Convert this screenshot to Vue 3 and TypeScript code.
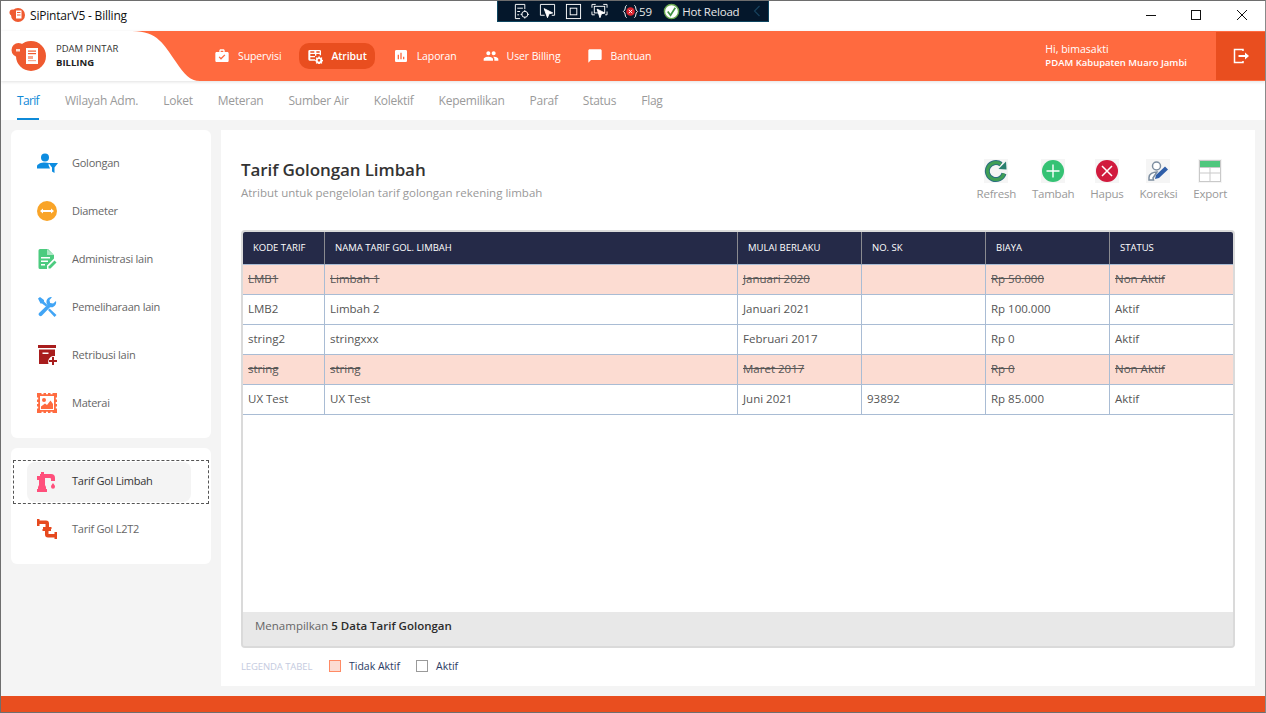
<script setup lang="ts">
import { ref } from 'vue';

interface Row {
  kode: string;
  nama: string;
  mulai: string;
  sk: string;
  biaya: string;
  status: string;
}

const tabs = ['Tarif', 'Wilayah Adm.', 'Loket', 'Meteran', 'Sumber Air', 'Kolektif', 'Kepemilikan', 'Paraf', 'Status', 'Flag'];
const activeTab = ref('Tarif');

const columns = ['KODE TARIF', 'NAMA TARIF GOL. LIMBAH', 'MULAI BERLAKU', 'NO. SK', 'BIAYA', 'STATUS'];

const rows: Row[] = [
  { kode: 'LMB1', nama: 'Limbah 1', mulai: 'Januari 2020', sk: '', biaya: 'Rp 50.000', status: 'Non Aktif' },
  { kode: 'LMB2', nama: 'Limbah 2', mulai: 'Januari 2021', sk: '', biaya: 'Rp 100.000', status: 'Aktif' },
  { kode: 'string2', nama: 'stringxxx', mulai: 'Februari 2017', sk: '', biaya: 'Rp 0', status: 'Aktif' },
  { kode: 'string', nama: 'string', mulai: 'Maret 2017', sk: '', biaya: 'Rp 0', status: 'Non Aktif' },
  { kode: 'UX Test', nama: 'UX Test', mulai: 'Juni 2021', sk: '93892', biaya: 'Rp 85.000', status: 'Aktif' },
];
</script>

<template>
  <div class="window">
    <div class="titlebar">
      <svg class="app-icon" viewBox="0 0 16 16">
        <circle cx="9" cy="8" r="7" fill="#ef5a30" />
        <circle cx="3.5" cy="5.5" r="3" fill="#ef5a30" />
        <rect x="7" y="3.5" width="5.5" height="8" fill="#fff" />
        <rect x="8" y="5" width="3.5" height="1" fill="#ef5a30" />
        <rect x="8" y="7.5" width="3.5" height="1" fill="#ef5a30" />
      </svg>
      <span class="app-title">SiPintarV5 - Billing</span>
      <div class="win-buttons">
        <svg viewBox="0 1 46 28"><path d="M19 15.500h10" stroke="#111" stroke-width="1" fill="none" /></svg>
        <svg viewBox="0 1 46 28"><rect x="18.500" y="10.500" width="9" height="9" stroke="#111" fill="none" /></svg>
        <svg viewBox="0 1 46 28"><path d="M18 10l10 10M28 10L18 20" stroke="#111" fill="none" /></svg>
      </div>
    </div>

    <div class="devbar">
      <svg class="dev-icon" viewBox="0 0 18 18" fill="none" stroke="#fff" stroke-width="1">
        <path d="M2.500 1.500h10v5M2.500 1.500v15h5M4.500 5.500h6M4.500 9h3M4.500 12.500h2" />
        <circle cx="12.500" cy="12" r="3.200" />
        <path d="M12.500 7.500v2M12.500 14.500v2M8 12h2M15 12h2" />
      </svg>
      <svg class="dev-icon" viewBox="0 0 18 18" fill="none" stroke="#fff" stroke-width="1">
        <path d="M6 13H1.500V1.500h15V13h-3" />
        <path d="M5.500 6l9 4.500-4 1-1.500 4z" fill="#fff" />
      </svg>
      <svg class="dev-icon" viewBox="0 0 18 18" fill="none" stroke="#fff" stroke-width="1">
        <rect x="1.500" y="1.500" width="15" height="15" />
        <rect x="5.500" y="5.500" width="7" height="7" />
      </svg>
      <svg class="dev-icon" viewBox="0 0 18 18" fill="none" stroke="#fff" stroke-width="1">
        <path d="M1 5V1.500h4M13 1.500h4V5M1 9v3.500h3M17 9v3.500h-2" />
        <rect x="3.500" y="3.500" width="11" height="7" />
        <path d="M6.500 6.500l8 4-3.500 1-1.500 4z" fill="#fff" />
      </svg>
      <span class="dev-count">
        <svg viewBox="0 0 18 18" width="17" height="17">
          <path d="M5 2.500C2.500 3 4.500 7.500 1.500 9 4.500 10.500 2.500 15 5 15.500M13 2.500C15.500 3 13.500 7.500 16.500 9 13.500 10.500 15.500 15 13 15.500" fill="none" stroke="#fff" />
          <circle cx="9" cy="9" r="4.500" fill="#d9232e" />
          <path d="M7.200 7.200l3.600 3.600M10.800 7.200l-3.600 3.600" stroke="#fff" />
        </svg>
        <span>59</span>
      </span>
      <span class="dev-reload">
        <svg viewBox="0 0 18 18" width="17" height="17">
          <circle cx="9" cy="9" r="7.500" fill="#fff" stroke="#6aa84f" stroke-width="1.500" />
          <path d="M5 9l3 4 5-8" fill="none" stroke="#3f9142" stroke-width="1.800" />
        </svg>
        <span>Hot Reload</span>
      </span>
      <svg class="dev-chevron" viewBox="0 0 8 12"><path d="M6.500 1L1.500 6l5 5" fill="none" stroke="#17405c" stroke-width="1.200" /></svg>
    </div>

    <header class="topnav">
      <div class="brand">
        <svg class="brand-logo" viewBox="0 0 36 30">
          <circle cx="20" cy="15" r="15" fill="#ef5a30" />
          <circle cx="7.500" cy="9" r="7" fill="#ef5a30" />
          <rect x="15" y="7" width="12" height="16" fill="#fff" />
          <rect x="17" y="9.500" width="8" height="1.200" fill="#ef5a30" />
          <rect x="17" y="12" width="8" height="1.200" fill="#ef5a30" />
          <rect x="17" y="15" width="5" height="3" fill="#f9a78e" />
          <rect x="17" y="19" width="8" height="1.200" fill="#f9a78e" />
          <rect x="5" y="8" width="4" height="2.500" fill="#fff" opacity="0.8" />
        </svg>
        <div class="brand-text">
          <div>PDAM PINTAR</div>
          <div class="brand-strong">BILLING</div>
        </div>
      </div>
      <svg class="curve" viewBox="0 0 68 50" preserveAspectRatio="none">
        <path d="M0 0C26 0 32 14 44 31 52 43 58 50 68 50H0Z" fill="#fff" />
      </svg>

      <nav class="nav">
        <a class="nav-item">
          <svg viewBox="0 0 24 24"><path d="M20 6h-4V4c0-1.100-.9-2-2-2h-4c-1.100 0-2 .9-2 2v2H4c-1.100 0-2 .9-2 2v11c0 1.100.9 2 2 2h16c1.100 0 2-.9 2-2V8c0-1.100-.9-2-2-2zM10 4h4v2h-4V4zm.5 13.500L7 14l1.400-1.400 2.100 2.100 5.100-5.100L17 11l-6.500 6.500z" /></svg>
          <span>Supervisi</span>
        </a>
        <a class="nav-item active">
          <svg viewBox="0 0 24 24">
            <path d="M4 3h15a2 2 0 0 1 2 2v6h-2V9h-5v2.500h-2V9H5v3h7v2H5v3h7v2H4a2 2 0 0 1-2-2V5a2 2 0 0 1 2-2zm1 2v2h6V5H5zm9 0v2h5V5h-5z" />
            <path d="M18 12.500l1 .1.400 1.500 1.200.5 1.300-.8 1.200 1.200-.8 1.300.5 1.200 1.200.4v1.800l-1.200.4-.5 1.200.8 1.300-1.200 1.200-1.300-.8-1.200.5-.4 1.200h-1.800l-.4-1.200-1.200-.5-1.300.8-1.200-1.200.8-1.300-.5-1.200-1.200-.4v-1.800l1.200-.4.5-1.200-.8-1.300 1.200-1.200 1.300.8 1.200-.5.4-1.500zm0 4a2 2 0 1 0 0 4 2 2 0 0 0 0-4z" />
          </svg>
          <span>Atribut</span>
        </a>
        <a class="nav-item">
          <svg viewBox="0 0 24 24"><path d="M19 3H5c-1.100 0-2 .9-2 2v14c0 1.100.9 2 2 2h14c1.100 0 2-.9 2-2V5c0-1.100-.9-2-2-2zM9 17H7v-7h2v7zm4 0h-2V7h2v10zm4 0h-2v-4h2v4z" /></svg>
          <span>Laporan</span>
        </a>
        <a class="nav-item">
          <svg viewBox="0 0 24 24"><path d="M16 11c1.660 0 2.990-1.340 2.990-3S17.660 5 16 5c-1.660 0-3 1.340-3 3s1.340 3 3 3zm-8 0c1.660 0 2.990-1.340 2.990-3S9.660 5 8 5C6.340 5 5 6.340 5 8s1.340 3 3 3zm0 2c-2.330 0-7 1.170-7 3.500V19h14v-2.500c0-2.330-4.670-3.500-7-3.500zm8 0c-.29 0-.62.02-.97.05 1.160.84 1.970 1.970 1.970 3.450V19h6v-2.500c0-2.330-4.670-3.500-7-3.500z" /></svg>
          <span>User Billing</span>
        </a>
        <a class="nav-item">
          <svg viewBox="0 0 24 24"><path d="M20 2H4c-1.100 0-2 .9-2 2v18l4-4h14c1.100 0 2-.9 2-2V4c0-1.100-.9-2-2-2z" /></svg>
          <span>Bantuan</span>
        </a>
      </nav>

      <div class="user">
        <div>Hi, bimasakti</div>
        <div class="user-org">PDAM Kabupaten Muaro Jambi</div>
      </div>
      <button class="logout" type="button">
        <svg viewBox="0 0 18 18" fill="none" stroke="#fff" stroke-width="1.500">
          <path d="M11 4V2.500H2.500v13H11V14" />
          <path d="M6.500 9h8" stroke-width="2" />
          <path d="M13 5.500L17 9l-4 3.500z" fill="#fff" stroke="none" />
        </svg>
      </button>
    </header>

    <div class="tabs">
      <a v-for="tab in tabs" :key="tab" class="tab" :class="{ on: tab === activeTab }">{{ tab }}</a>
    </div>

    <div class="body">
      <aside class="side">
        <div class="side-card">
          <a class="side-item">
            <svg viewBox="0 0 20 20">
              <circle cx="8" cy="4.500" r="4" fill="#0d8ce0" />
              <path d="M0 15.500v-2c0-2.500 4-4 8-4 1.500 0 3 .2 4 .6L11.500 12l1.500 3.500z" fill="#0d8ce0" />
              <path d="M11.500 10H21l-3.500 4.500V20l-2.500-1.500v-4z" fill="#0d8ce0" />
            </svg>
            <span>Golongan</span>
          </a>
          <a class="side-item">
            <svg viewBox="0 0 20 20">
              <circle cx="10" cy="10" r="10" fill="#f9a428" />
              <path d="M3 10l3-2.500V9h8V7.500l3 2.500-3 2.500V11H6v1.500z" fill="#fff" />
            </svg>
            <span>Diameter</span>
          </a>
          <a class="side-item">
            <svg viewBox="0 0 20 20">
              <path d="M3 0h8l6 6v3.500l-7 7V20H3a1.500 1.500 0 0 1-1.500-1.500v-17A1.500 1.500 0 0 1 3 0z" fill="#4ccb7f" />
              <path d="M4 8h9v1.500H4zM4 11.500h7V13H4zM4 15h4v1.500H4z" fill="#fff" />
              <path d="M10 0l7 6h-7z" fill="#fff" opacity="0.55" />
              <path d="M11.500 17.500l6-6 2 2-6 6h-2z" fill="#4ccb7f" />
            </svg>
            <span>Administrasi lain</span>
          </a>
          <a class="side-item">
            <svg viewBox="0 0 20 20" fill="#42a5f5">
              <path d="M13.500 0a4.500 4.500 0 0 1 1.500.3L12.500 3l.6 3 3 .6L19 4a5 5 0 0 1-6 6.200L5 18.500a2 2 0 0 1-3.200-2.300l8.600-8.300A5 5 0 0 1 13.500 0z" />
              <path d="M1 1.500l2-1.500 4 3v1.500l3.500 3.500-1.500 1.500L5 6.500H3.500zM12.500 11.500l7 6.500-2 2-6.500-7z" />
            </svg>
            <span>Pemeliharaan lain</span>
          </a>
          <a class="side-item">
            <svg viewBox="0 0 20 20" fill="#a81d1d">
              <path d="M1 0h18v3H1zM2 4.500h16v6.500a6 6 0 0 0-6.500 8H2z" />
              <path d="M5.500 7.500h6V9h-6z" fill="#fff" />
              <path d="M15 12h2v3h3v2h-3v3h-2v-3h-3v-2h3z" />
            </svg>
            <span>Retribusi lain</span>
          </a>
          <a class="side-item">
            <svg viewBox="0 0 20 20">
              <rect width="20" height="20" fill="#ff6b40" />
              <path d="M4.500 0h2v1.200h-2zM9 0h2v1.200H9zM13.500 0h2v1.200h-2zM4.500 18.800h2V20h-2zM9 18.800h2V20H9zM13.500 18.800h2V20h-2zM0 4.500h1.200v2H0zM0 9h1.200v2H0zM0 13.500h1.200v2H0zM18.800 4.500H20v2h-1.200zM18.800 9H20v2h-1.200zM18.800 13.500H20v2h-1.200z" fill="#fff" />
              <rect x="3" y="3" width="14" height="14" fill="#fff" />
              <circle cx="7" cy="7" r="2" fill="#ff6b40" />
              <path d="M4 16v-2.500l4-3 2 1.500 3.500-4.500L16 11v5z" fill="#ff6b40" />
            </svg>
            <span>Materai</span>
          </a>
        </div>

        <div class="side-card second">
          <a class="side-item current">
            <svg viewBox="0 0 20 20" fill="#ff4f7b">
              <path d="M4 0h3v2h7a4 4 0 0 1 4 4v3h-4V7a1 1 0 0 0-1-1H8v7l1 2v2h1v3H0v-3h1v-2l1-2V8H0V4h3V2h1z" />
              <path d="M16 11c1.300 1.700 2 2.700 2 3.700a2 2 0 0 1-4 0c0-1 .7-2 2-3.700z" />
            </svg>
            <span>Tarif Gol Limbah</span>
          </a>
          <a class="side-item">
            <svg viewBox="0 0 20 20" fill="#e6491e">
              <path d="M0 0h2.500v1.500H9a3 3 0 0 1 3 3V8h2.500v2H6V8h2.500V5H2.500v2H0z" />
              <path transform="rotate(180 10 10)" d="M0 0h2.500v1.500H9a3 3 0 0 1 3 3V8h2.500v2H6V8h2.500V5H2.500v2H0z" />
            </svg>
            <span>Tarif Gol L2T2</span>
          </a>
        </div>
      </aside>

      <main class="content">
        <div class="content-head">
          <div>
            <h1>Tarif Golongan Limbah</h1>
            <p>Atribut untuk pengelolan tarif golongan rekening limbah</p>
          </div>
          <div class="actions">
            <a class="action">
              <span class="action-icon">
                <svg viewBox="0 0 24 24">
                  <path d="M20 14.500a8.500 8.500 0 1 1-3-9.200" fill="none" stroke="#2b6f7f" stroke-width="5" />
                  <path d="M20 14.500a8.500 8.500 0 1 1-3-9.200" fill="none" stroke="#3f9e55" stroke-width="3" />
                  <path d="M14.500 10L22.500 10.500 22 2.500z" fill="#2b7f6f" />
                </svg>
              </span>
              <span>Refresh</span>
            </a>
            <a class="action">
              <span class="action-icon">
                <svg viewBox="0 0 24 24">
                  <circle cx="12" cy="12" r="11" fill="#35c274" />
                  <path d="M12 5.500v13M5.500 12h13" stroke="#fff" stroke-width="1.400" />
                </svg>
              </span>
              <span>Tambah</span>
            </a>
            <a class="action">
              <span class="action-icon">
                <svg viewBox="0 0 24 24">
                  <circle cx="12" cy="12" r="11" fill="#d11a3d" />
                  <path d="M7 7l10 10M17 7L7 17" stroke="#fff" stroke-width="1.500" />
                </svg>
              </span>
              <span>Hapus</span>
            </a>
            <a class="action">
              <span class="action-icon">
                <svg viewBox="0 0 24 24">
                  <circle cx="10.500" cy="7" r="4" fill="#fff" stroke="#7d8ea0" stroke-width="1.500" />
                  <path d="M3 21v-2.500c0-3.500 4-5.500 8-5.500l-4 6 .5 2z" fill="#fff" stroke="#7d8ea0" stroke-width="1.500" />
                  <path d="M9 20l1-4 9-8.500 3 3-9 8.500z" fill="#2f5ea8" />
                </svg>
              </span>
              <span>Koreksi</span>
            </a>
            <a class="action">
              <span class="action-icon">
                <svg viewBox="0 0 24 24">
                  <rect x="1.500" y="1.500" width="21" height="21" fill="#fff" stroke="#c9c9c9" />
                  <rect x="2" y="2" width="20" height="6.500" fill="#4fc77d" />
                  <path d="M2 14h20M12 8v14M2 8.500h20" stroke="#c9c9c9" />
                </svg>
              </span>
              <span>Export</span>
            </a>
          </div>
        </div>

        <div class="table-box">
          <div class="table-scroll">
            <table>
              <colgroup>
                <col style="width: 82px" />
                <col style="width: 413px" />
                <col style="width: 124px" />
                <col style="width: 124px" />
                <col style="width: 124px" />
                <col />
              </colgroup>
              <thead>
                <tr>
                  <th v-for="c in columns" :key="c">{{ c }}</th>
                </tr>
              </thead>
              <tbody>
                <tr v-for="r in rows" :key="r.kode" :class="{ off: r.status === 'Non Aktif' }">
                  <td>{{ r.kode }}</td>
                  <td>{{ r.nama }}</td>
                  <td>{{ r.mulai }}</td>
                  <td>{{ r.sk }}</td>
                  <td>{{ r.biaya }}</td>
                  <td>{{ r.status }}</td>
                </tr>
              </tbody>
            </table>
          </div>
          <div class="table-foot">Menampilkan <b>5 Data Tarif Golongan</b></div>
        </div>

        <div class="legend">
          <span class="legend-title">LEGENDA TABEL</span>
          <span class="swatch red"></span>
          <span class="legend-label">Tidak Aktif</span>
          <span class="swatch"></span>
          <span class="legend-label">Aktif</span>
        </div>
      </main>
    </div>

    <div class="footer-bar"></div>
  </div>
</template>

<style>
html,
body {
  margin: 0;
  background: #fff;
}
</style>

<style scoped>
.window {
  position: relative;
  box-sizing: border-box;
  width: 1266px;
  height: 713px;
  display: flex;
  flex-direction: column;
  overflow: hidden;
  border: 1px solid #6e6e6e;
  border-right-color: #8a8a8a;
  background: #fff;
  font-family: 'Open Sans', 'Noto Sans', sans-serif;
  color: #555;
}

.titlebar {
  height: 30px;
  box-sizing: border-box;
  display: flex;
  align-items: center;
  padding: 0 0 2px 8px;
  flex: none;
}
.app-icon {
  width: 16px;
  height: 16px;
  margin-right: 5px;
}
.app-title {
  font-size: 12px;
  letter-spacing: -0.2px;
  color: #111;
}
.win-buttons {
  margin-left: auto;
  display: flex;
}
.win-buttons svg {
  width: 46px;
  height: 28px;
}

.devbar {
  position: absolute;
  top: -1px;
  left: 496px;
  width: 272px;
  height: 22px;
  box-sizing: border-box;
  display: flex;
  align-items: center;
  padding-left: 15px;
  background: #04172b;
  border: 1px solid #0d4560;
  color: #e8e8e8;
  font-size: 11.500px;
  white-space: nowrap;
}
.dev-icon {
  width: 17px;
  height: 17px;
  margin-right: 9px;
  flex: none;
}
.dev-count,
.dev-reload {
  display: flex;
  align-items: center;
  flex: none;
}
.dev-count {
  gap: 0;
  margin-left: 5px;
  margin-right: 11px;
}
.dev-reload {
  gap: 2px;
  letter-spacing: -0.2px;
}
.dev-chevron {
  width: 8px;
  height: 12px;
  margin-left: 14px;
  flex: none;
}

.topnav {
  height: 50px;
  flex: none;
  display: flex;
  align-items: stretch;
  background: #ff6a3f;
  box-shadow: 0 1px 3px rgba(0, 0, 0, 0.12);
  position: relative;
  z-index: 1;
}
.brand {
  width: 131px;
  background: #fff;
  display: flex;
  align-items: center;
  box-sizing: border-box;
  padding-left: 10px;
  gap: 9px;
}
.brand-logo {
  width: 36px;
  height: 30px;
  flex: none;
}
.brand-text {
  font-size: 9.500px;
  line-height: 14px;
  color: #333;
}
.brand-strong {
  font-weight: 700;
  color: #222;
}
.curve {
  width: 68px;
  height: 50px;
  flex: none;
}
.nav {
  display: flex;
  align-items: center;
  gap: 10px;
  margin-left: 6px;
}
.nav-item {
  display: flex;
  align-items: center;
  height: 26px;
  padding: 0 8px;
  gap: 8px;
  border-radius: 10px;
  color: #fff;
  font-size: 10.500px;
  letter-spacing: -0.1px;
}
.nav-item svg {
  width: 16px;
  height: 16px;
  fill: #fff;
  flex: none;
}
.nav-item span {
  margin-top: -1px;
}
.nav-item.active {
  background: #e94e1f;
  font-weight: 600;
}
.user {
  margin-left: auto;
  align-self: center;
  color: #fff;
  font-size: 10.500px;
  line-height: 13px;
  margin-right: 29px;
}
.user-org {
  font-weight: 600;
  font-size: 9.500px;
}
.logout {
  width: 49px;
  margin: 1px 0;
  border: 0;
  padding: 0;
  background: #e94e1f;
  display: flex;
  align-items: center;
  justify-content: center;
}
.logout svg {
  width: 18px;
  height: 18px;
}

.tabs {
  height: 39px;
  flex: none;
  display: flex;
  padding-left: 16px;
  gap: 25px;
}
.tab {
  height: 39px;
  line-height: 39px;
  box-sizing: border-box;
  font-size: 12px;
  letter-spacing: -0.25px;
  color: #9a9a9a;
}
.tab.on {
  color: #0f8ad8;
  letter-spacing: -0.65px;
  margin-right: 1px;
  border-bottom: 2px solid #0f8ad8;
}

.body {
  flex: 1;
  min-height: 0;
  display: flex;
  background: #f4f4f4;
  padding: 10px;
  gap: 10px;
}
.side {
  width: 200px;
  flex: none;
}
.side-card {
  background: #fff;
  border-radius: 6px;
  padding: 9px 0 11px;
}
.side-card.second {
  margin-top: 10px;
}
.side-item {
  height: 48px;
  display: flex;
  align-items: center;
  margin: 0 20px 0 16px;
  padding-left: 10px;
  font-size: 11px;
  font-weight: 500;
  letter-spacing: -0.25px;
  color: #666;
  gap: 15px;
  position: relative;
  border-radius: 8px;
}
.side-item span {
  margin-top: -2px;
}
.side-item svg {
  width: 20px;
  height: 20px;
  flex: none;
  overflow: visible;
}
.side-item.current {
  color: #333;
  background: #f4f4f4;
  height: 40px;
  margin-top: 5px;
  margin-bottom: 3px;
}
.side-item.current span {
  margin-top: -4px;
}
.side-item.current::after {
  content: '';
  position: absolute;
  left: -14px;
  right: -18px;
  top: -2px;
  bottom: -2px;
  border: 1px dashed #555;
}

.content {
  flex: 1;
  min-width: 0;
  background: #fff;
  box-sizing: border-box;
  padding: 20px 20px 0;
  display: flex;
  flex-direction: column;
}
.content-head {
  height: 80px;
  flex: none;
  display: flex;
  justify-content: space-between;
}
h1 {
  margin: 8px 0 0;
  font-size: 17px;
  line-height: 24px;
  font-weight: 600;
  letter-spacing: -0.1px;
  color: #333;
}
.content-head p {
  margin: 3px 0 0;
  font-size: 11.500px;
  line-height: 16px;
  color: #999;
}
.actions {
  display: flex;
  gap: 16px;
  margin-right: 8px;
  margin-top: 9px;
}
.action {
  display: flex;
  flex-direction: column;
  align-items: center;
  gap: 3px;
  font-size: 11.500px;
  letter-spacing: -0.25px;
  color: #999;
}
.action-icon {
  width: 24px;
  height: 24px;
  display: block;
  background: #f5f5f5;
}
.action-icon svg {
  width: 24px;
  height: 24px;
  display: block;
}

.table-box {
  height: 418px;
  flex: none;
  box-sizing: border-box;
  border: 2px solid #dadada;
  border-radius: 4px;
  display: flex;
  flex-direction: column;
  background: #e8e8e8;
  overflow: hidden;
}
.table-scroll {
  flex: 1;
  background: #fff;
}
table {
  width: 990px;
  table-layout: fixed;
  border-collapse: separate;
  border-spacing: 0;
  font-size: 11.500px;
}
th {
  height: 33px;
  box-sizing: border-box;
  padding: 0 0 1px 10px;
  background: #252a48;
  color: #fff;
  text-align: left;
  font-weight: 500;
  font-size: 9.500px;
  letter-spacing: 0;
  border-right: 1px solid #8a8a90;
  border-bottom: 1px solid #a9bcd4;
}
th:last-child,
td:last-child {
  border-right: 0;
}
td {
  height: 30px;
  box-sizing: border-box;
  padding: 0 0 3px 5px;
  color: #555;
  border-right: 1px solid #a9bcd4;
  border-bottom: 1px solid #a9bcd4;
}
tr.off td {
  background: #fcdcd2;
  text-decoration: line-through;
}
.table-foot {
  height: 34px;
  flex: none;
  line-height: 28px;
  padding-left: 12px;
  font-size: 11.500px;
  color: #666;
  background: #e8e8e8;
}
.table-foot b {
  font-weight: 600;
  color: #2c2c2c;
}

.legend {
  display: flex;
  align-items: center;
  margin-top: 10px;
  height: 16px;
  font-size: 10.500px;
}
.legend-title {
  font-size: 9.500px;
  letter-spacing: -0.1px;
  color: #c5cbe0;
  width: 88px;
}
.swatch {
  width: 12px;
  height: 12px;
  box-sizing: border-box;
  border: 1px solid #9a9a9a;
  margin-right: 8px;
}
.swatch.red {
  background: #fcdcd2;
  border-color: #ff8a65;
}
.legend-label {
  color: #2b3b63;
  margin-right: 16px;
}

.footer-bar {
  height: 16px;
  flex: none;
  background: #e94e1f;
}
</style>
